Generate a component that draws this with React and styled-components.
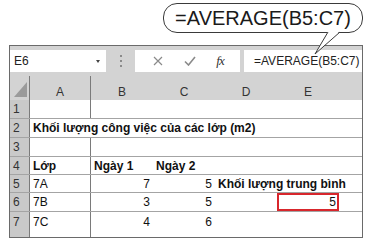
import styled, { createGlobalStyle } from 'styled-components';

const Global = createGlobalStyle`
  body {
    margin: 0;
    background: #fff;
    font-family: "Liberation Sans", Arial, sans-serif;
  }
`;

const Page = styled.div`
  position: relative;
  width: 371px;
  height: 240px;
  padding: 3px 0 0 9px;
  box-sizing: border-box;
`;

const Bubble = styled.div`
  margin-left: 154px;
  width: 200px;
  height: 30px;
  box-sizing: border-box;
  border: 1px solid #3a3a3a;
  border-radius: 14px;
  display: flex;
  align-items: center;
  justify-content: center;
  font-size: 20px;
  color: #1a1a1a;
  background: #fff;
`;

const Tail = styled.svg`
  position: absolute;
  left: 0;
  top: 0;
  z-index: 2;
`;

const Frame = styled.div`
  margin-top: 12px;
  width: 354px;
  height: 193px;
  box-sizing: border-box;
  border: 1px solid #6a6a6a;
  background: #d3d3d3;
  display: flex;
  flex-direction: column;
`;

const Toolbar = styled.div`
  height: 30px;
  box-sizing: border-box;
  padding-top: 4px;
  display: flex;
  align-items: flex-start;
`;

const NameBox = styled.div`
  width: 96px;
  height: 22px;
  background: #fff;
  display: flex;
  align-items: center;
  justify-content: space-between;
  padding: 0 6px 0 4px;
  box-sizing: border-box;
  font-size: 12px;
  color: #222;
`;

const Arrow = styled.span`
  width: 0;
  height: 0;
  border-left: 2.5px solid transparent;
  border-right: 2.5px solid transparent;
  border-top: 3px solid #444;
`;

const Grip = styled.div`
  width: 29px;
  height: 22px;
  display: flex;
  flex-direction: column;
  align-items: center;
  justify-content: center;
  gap: 3px;
  padding-left: 1px;
  box-sizing: border-box;
`;

const Dot = styled.span`
  width: 2px;
  height: 2px;
  background: #8a8a8a;
`;

const Buttons = styled.div`
  width: 105px;
  height: 22px;
  background: #fff;
  display: flex;
  align-items: center;
  justify-content: space-around;
  padding: 0 6px 0 8px;
  box-sizing: border-box;
`;

const Fx = styled.span`
  font-family: "Liberation Serif", "Times New Roman", serif;
  font-style: italic;
  font-size: 13px;
  color: #333;
  letter-spacing: -1px;
`;

const Formula = styled.div`
  flex: 1;
  margin-left: 4px;
  height: 22px;
  background: #fff;
  display: flex;
  align-items: center;
  padding-left: 10px;
  font-size: 12px;
  color: #222;
  white-space: nowrap;
  overflow: hidden;
`;

const Sheet = styled.div`
  flex: 1;
  display: flex;
  flex-direction: column;
`;

const Row = styled.div`
  display: grid;
  grid-template-columns: 20px 61px 62px 62px 62px 62px 1fr;
  height: ${p => p.$h}px;
  flex: ${p => (p.$last ? 1 : 'none')};
  box-sizing: border-box;
  background: ${p => (p.$head ? '#d3d3d3' : '#fff')};
  border-bottom: ${p => (p.$head || p.$last ? 'none' : '1px solid #a4a4a4')};
`;

const Corner = styled.div`
  border-right: 1px solid #7a7a7a;
  display: flex;
  align-items: flex-end;
  justify-content: flex-end;
  padding: 0 2px 3px 0;
`;

const ColHead = styled.div`
  display: flex;
  align-items: center;
  justify-content: center;
  padding-top: 8px;
  font-size: 12px;
  color: #333;
  border-right: ${p => (p.$sep ? '1px solid #7a7a7a' : 'none')};
`;

const RowHead = styled.div`
  background: #c9c9c9;
  border-right: 1px solid #7a7a7a;
  display: flex;
  align-items: ${p => (p.$last ? 'flex-start' : 'center')};
  padding: ${p => (p.$last ? '3px 0 0 3px' : '0 0 0 3px')};
  font-size: 12px;
  color: #333;
`;

const Cell = styled.div`
  position: relative;
  display: flex;
  align-items: ${p => (p.$last ? 'flex-start' : 'center')};
  justify-content: ${p => (p.$right ? 'flex-end' : 'flex-start')};
  padding: ${p => (p.$last ? '3px 3px 0' : '0 3px')};
  font-size: 12px;
  font-weight: ${p => (p.$bold ? 700 : 400)};
  color: #111;
  white-space: nowrap;
  overflow: visible;
  min-width: 0;
  border-right: ${p => (p.$sep ? '1px solid #7a7a7a' : 'none')};
  outline: ${p => (p.$active ? '2px solid #d8262c' : 'none')};
  outline-offset: -2px;
`;

const Text = styled.span`
  position: relative;
  z-index: 1;
`;

const rows = [
  { n: 1, h: 19, cells: [{}, {}, {}, {}, {}] },
  { n: 2, h: 19, overflow: true, cells: [{ t: 'Khối lượng công việc của các lớp (m2)', bold: true }, {}, {}, {}, {}] },
  { n: 3, h: 19, cells: [{}, {}, {}, {}, {}] },
  { n: 4, h: 18, cells: [{ t: 'Lớp', bold: true }, { t: 'Ngày 1', bold: true }, { t: 'Ngày 2', bold: true }, {}, {}] },
  { n: 5, h: 18, cells: [{ t: '7A' }, { t: '7', right: true }, { t: '5', right: true }, { t: 'Khối lượng trung bình', bold: true }, {}] },
  { n: 6, h: 19, cells: [{ t: '7B' }, { t: '3', right: true }, { t: '5', right: true }, {}, { t: '5', right: true, active: true }] },
  { n: 7, h: 19, last: true, cells: [{ t: '7C' }, { t: '4', right: true }, { t: '6', right: true }, {}, {}] },
];

export default function App() {
  return (
    <>
      <Global />
      <Page>
        <Bubble>=AVERAGE(B5:C7)</Bubble>
        <Tail width="371" height="70" viewBox="0 0 371 70">
          <polygon points="328,31 340,31 315,54" fill="#fff" />
          <polyline points="328,32 315,54 340,32" fill="none" stroke="#3a3a3a" strokeWidth="1" />
        </Tail>
        <Frame>
          <Toolbar>
            <NameBox>
              E6
              <Arrow />
            </NameBox>
            <Grip>
              <Dot />
              <Dot />
              <Dot />
            </Grip>
            <Buttons>
              <svg width="10" height="10" viewBox="0 0 10 10">
                <path d="M1 1L9 9M9 1L1 9" stroke="#8a8a8a" strokeWidth="1.2" fill="none" />
              </svg>
              <svg width="12" height="10" viewBox="0 0 12 10">
                <path d="M1 5.5L4.5 9L11 1" stroke="#8a8a8a" strokeWidth="1.6" fill="none" />
              </svg>
              <Fx>fx</Fx>
            </Buttons>
            <Formula>=AVERAGE(B5:C7)</Formula>
          </Toolbar>
          <Sheet>
            <Row $h={24} $head>
              <Corner>
                <svg width="13" height="15" viewBox="0 0 13 15">
                  <polygon points="13,0 13,15 0,15" fill="#9b9b9b" />
                </svg>
              </Corner>
              {['A', 'B', 'C', 'D', 'E'].map((c, i) => (
                <ColHead key={c} $sep={i === 0}>{c}</ColHead>
              ))}
              <ColHead />
            </Row>
            {rows.map(r => (
              <Row key={r.n} $h={r.h} $last={r.last}>
                <RowHead $last={r.last}>{r.n}</RowHead>
                {r.cells.map((c, i) => (
                  <Cell
                    key={i}
                    $bold={c.bold}
                    $right={c.right}
                    $active={c.active}
                    $last={r.last}
                    $sep={i === 0 && !r.overflow}
                  >
                    {c.t && <Text>{c.t}</Text>}
                  </Cell>
                ))}
                <Cell $last={r.last} />
              </Row>
            ))}
          </Sheet>
        </Frame>
      </Page>
    </>
  );
}
